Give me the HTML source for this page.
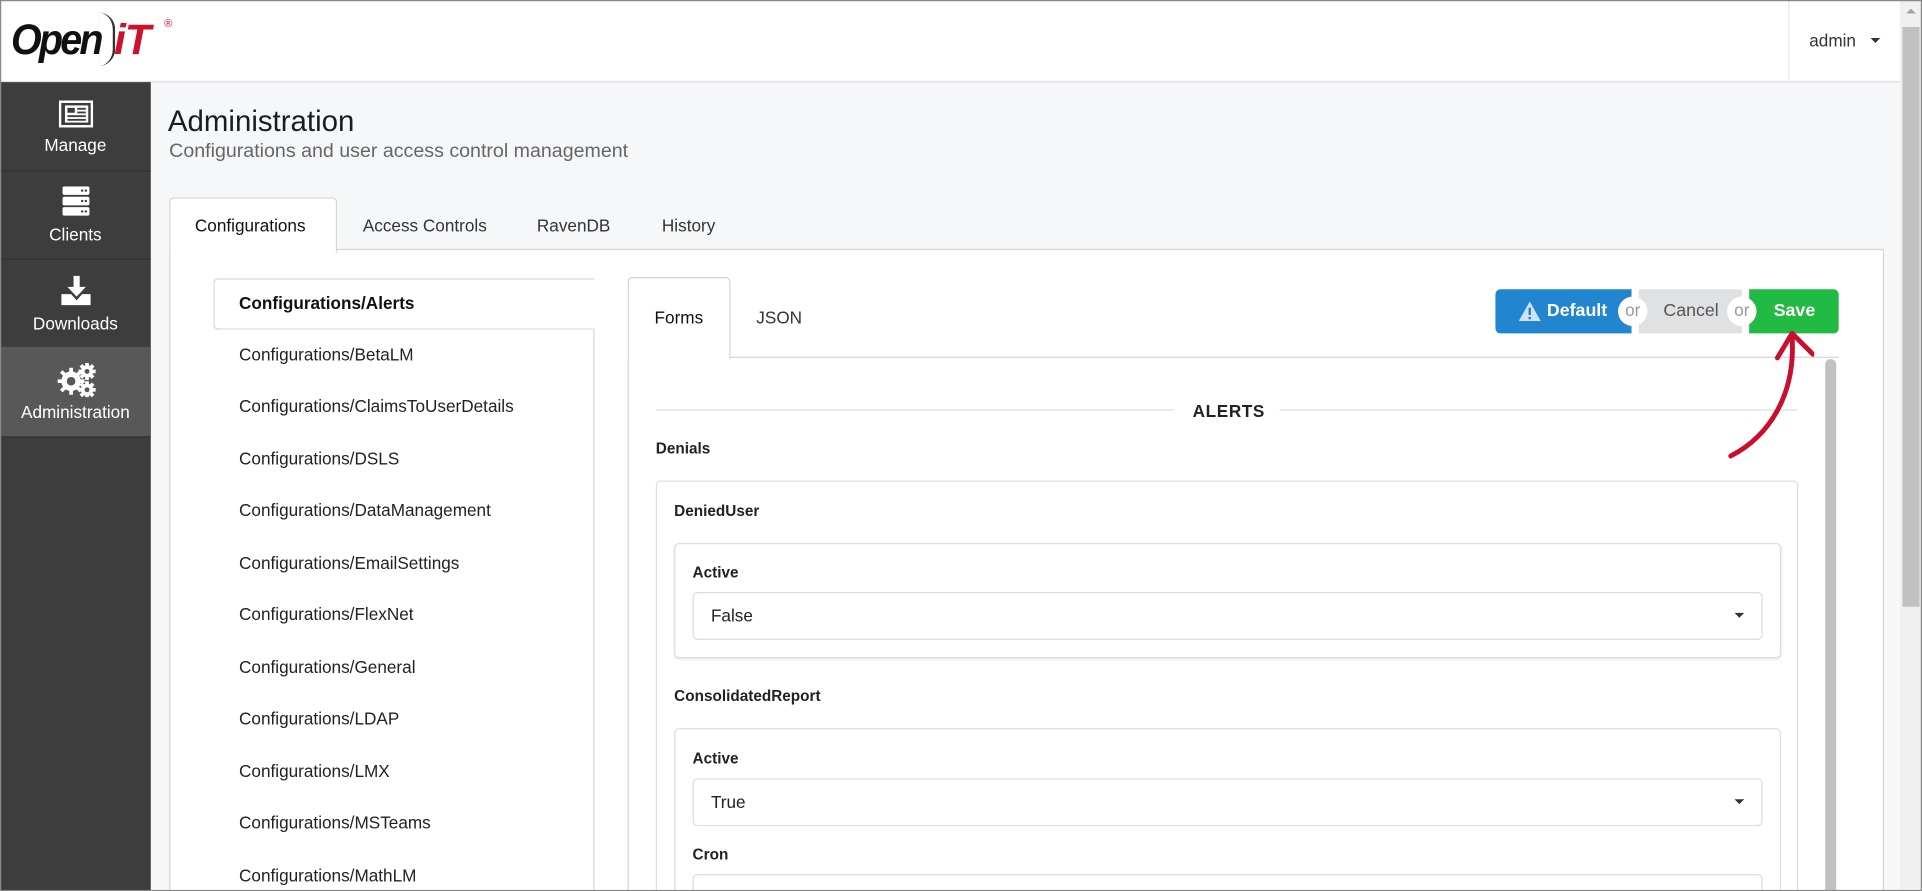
<!DOCTYPE html>
<html><head><meta charset="utf-8"><style>
html,body{margin:0;padding:0;width:1922px;height:891px;overflow:hidden;background:#fff}
#w{position:absolute;left:0;top:0;width:1568px;height:727px;transform:scale(1.22577);transform-origin:0 0;font-family:"Liberation Sans",sans-serif;color:#222;background:#f6f7f9;overflow:hidden}
.a{position:absolute}
.t{position:absolute;white-space:nowrap}
</style></head><body><div id="w">
<!-- header -->
<div class="a" style="left:0;top:0;width:1550px;height:66px;background:#fff;box-shadow:0 1px 2px rgba(0,0,0,.15)"></div>
<div class="t" style="left:9px;top:13px;font-size:35px;font-weight:bold;font-style:italic;letter-spacing:-2.5px;color:#111;transform:scaleX(.92);transform-origin:0 0">Open</div>
<div class="a" style="left:80px;top:10px;width:12px;height:44px;border-right:2px solid #333;border-radius:0 30px 30px 0"></div>
<div class="t" style="left:93px;top:13px;font-size:35px;font-weight:bold;font-style:italic;color:#d0112b;letter-spacing:-1px">iT</div>
<div class="t" style="left:134px;top:14px;font-size:9px;color:#d0112b">®</div>
<div class="a" style="left:1459px;top:0;width:1px;height:66px;background:#e6e6e6"></div>
<div class="t" style="left:1476px;top:25px;font-size:14px;color:#333">admin</div>
<div class="a" style="left:1526px;top:31px;border-left:4px solid transparent;border-right:4px solid transparent;border-top:4px solid #333"></div>
<!-- scrollbar -->
<div class="a" style="left:1550px;top:0;width:18px;height:727px;background:#f0f0f0"></div>
<div class="a" style="left:1552px;top:22px;width:14px;height:473px;background:#c1c1c1"></div>
<div class="a" style="left:1555px;top:7px;border-left:4px solid transparent;border-right:4px solid transparent;border-bottom:4px solid #a3a3a3"></div>
<!-- sidebar -->
<div class="a" style="left:0;top:67px;width:123px;height:660px;background:#3d3d3d"></div>
<div class="a" style="left:0;top:139px;width:123px;height:1px;background:#333"></div>
<div class="a" style="left:0;top:211px;width:123px;height:1px;background:#333"></div>
<div class="a" style="left:0;top:283px;width:123px;height:73px;background:#585858"></div>
<div class="a" style="left:0;top:356px;width:123px;height:1px;background:#333"></div>
<svg class="a" style="left:48px;top:82px" width="28" height="22" viewBox="0 0 28 22"><rect x="1" y="1" width="26" height="20" fill="none" stroke="#fff" stroke-width="2"/><rect x="5" y="4" width="19" height="14" fill="#fff"/><rect x="7" y="6" width="6" height="4" fill="#3d3d3d"/><rect x="15" y="6" width="7" height="1.5" fill="#3d3d3d"/><rect x="15" y="9" width="7" height="1.5" fill="#3d3d3d"/><rect x="7" y="12" width="15" height="1.5" fill="#3d3d3d"/><rect x="7" y="15" width="15" height="1.5" fill="#3d3d3d"/></svg>
<div class="t" style="left:0;width:123px;text-align:center;top:110px;font-size:14px;color:#fff">Manage</div>
<svg class="a" style="left:51px;top:152px" width="22" height="24" viewBox="0 0 22 24"><rect x="0" y="0" width="22" height="7" rx="1.5" fill="#fff"/><rect x="0" y="8.5" width="22" height="7" rx="1.5" fill="#fff"/><rect x="0" y="17" width="22" height="7" rx="1.5" fill="#fff"/><g fill="#3d3d3d"><circle cx="16" cy="3.5" r="1"/><circle cx="19" cy="3.5" r="1"/><circle cx="16" cy="12" r="1"/><circle cx="19" cy="12" r="1"/><circle cx="16" cy="20.5" r="1"/><circle cx="19" cy="20.5" r="1"/></g></svg>
<div class="t" style="left:0;width:123px;text-align:center;top:183px;font-size:14px;color:#fff">Clients</div>
<svg class="a" style="left:50px;top:225px" width="24" height="24" viewBox="0 0 24 24"><rect x="10" y="0" width="5" height="10" fill="#fff"/><path d="M5 9 L20 9 L12.5 17 Z" fill="#fff"/><path d="M0 15 L8 15 L12.5 20 L17 15 L24 15 L24 24 L0 24 Z" fill="#fff"/></svg>
<div class="t" style="left:0;width:123px;text-align:center;top:256px;font-size:14px;color:#fff">Downloads</div>
<svg class="a" style="left:47px;top:296px" width="32" height="28" viewBox="0 0 32 28"><g fill="#fff"><circle cx="11" cy="15" r="8"/><circle cx="24" cy="7" r="5"/><circle cx="24" cy="22" r="5"/></g><g stroke="#fff" stroke-width="3"><path d="M11 4v22M0 15h22M3 7l16 16M19 7L3 23"/><path d="M24 0v14M17 7h14M19 2l10 10M29 2L19 12"/><path d="M24 15v14M17 22h14M19 17l10 10M29 17L19 27"/></g><g fill="#585858"><circle cx="11" cy="15" r="3.5"/><circle cx="24" cy="7" r="2"/><circle cx="24" cy="22" r="2"/></g></svg>
<div class="t" style="left:0;width:123px;text-align:center;top:328px;font-size:14px;color:#fff">Administration</div>
<!-- title -->
<div class="t" style="left:137px;top:86px;font-size:24px;color:#1b1c1d">Administration</div>
<div class="t" style="left:138px;top:115px;font-size:16px;color:#666">Configurations and user access control management</div>
<!-- tabs -->
<div class="a" style="left:138px;top:203px;width:1397px;height:530px;background:#fff;border:1px solid #d4d4d5"></div>
<div class="a" style="left:138px;top:161px;width:135px;height:44px;background:#fff;border:1px solid #d4d4d5;border-bottom:none;border-radius:4px 4px 0 0"></div>
<div class="t" style="left:159px;top:176px;font-size:14px;color:#111">Configurations</div>
<div class="t" style="left:296px;top:176px;font-size:14px;color:#333">Access Controls</div>
<div class="t" style="left:438px;top:176px;font-size:14px;color:#333">RavenDB</div>
<div class="t" style="left:540px;top:176px;font-size:14px;color:#333">History</div>
<!-- left list -->
<div class="a" style="left:484px;top:227px;width:1px;height:500px;background:#d4d4d5"></div>
<div class="a" style="left:174px;top:227px;width:310px;height:40px;border:1px solid #d4d4d5;border-right:none;border-radius:4px 0 0 4px;background:#fff"></div>
<div class="t" style="left:195px;top:239px;font-size:14px;font-weight:bold;color:#111">Configurations/Alerts</div>
<div style="position:absolute;left:195px;top:268px;font-size:14px;color:#222;line-height:42.45px;white-space:nowrap">Configurations/BetaLM<br>Configurations/ClaimsToUserDetails<br>Configurations/DSLS<br>Configurations/DataManagement<br>Configurations/EmailSettings<br>Configurations/FlexNet<br>Configurations/General<br>Configurations/LDAP<br>Configurations/LMX<br>Configurations/MSTeams<br>Configurations/MathLM</div>
<!-- right panel tabs -->
<div class="a" style="left:595px;top:291px;width:905px;height:1px;background:#d4d4d5"></div>
<div class="a" style="left:512px;top:226px;width:82px;height:66px;background:#fff;border:1px solid #d4d4d5;border-bottom:none;border-radius:4px 4px 0 0"></div>
<div class="a" style="left:512px;top:292px;width:1px;height:440px;background:#d4d4d5"></div>
<div class="t" style="left:534px;top:251px;font-size:14px;color:#111">Forms</div>
<div class="t" style="left:617px;top:251px;font-size:14px;color:#333">JSON</div>
<!-- buttons -->
<div class="a" style="left:1220px;top:236px;width:111px;height:36px;background:#2185d0;border-radius:4px 0 0 4px"></div>
<svg class="a" style="left:1239px;top:246px" width="18" height="16" viewBox="0 0 18 16"><path d="M9 0 L18 16 L0 16 Z" fill="#cfe3f5"/><rect x="8" y="5" width="2" height="6" fill="#2185d0"/><rect x="8" y="12.5" width="2" height="2" fill="#2185d0"/></svg>
<div class="t" style="left:1262px;top:246px;font-size:14.5px;font-weight:bold;color:#fff">Default</div>
<div class="a" style="left:1337px;top:236px;width:84px;height:36px;background:#e0e1e2"></div>
<div class="t" style="left:1357px;top:246px;font-size:14.5px;color:#555">Cancel</div>
<div class="a" style="left:1427px;top:236px;width:73px;height:36px;background:#21ba45;border-radius:0 4px 4px 0"></div>
<div class="t" style="left:1447px;top:246px;font-size:14.5px;font-weight:bold;color:#fff">Save</div>
<div class="a" style="left:1320px;top:242px;width:24px;height:24px;border-radius:50%;background:#fff;font-size:14px;color:#999;text-align:center;line-height:23px">or</div>
<div class="a" style="left:1409px;top:242px;width:24px;height:24px;border-radius:50%;background:#fff;font-size:14px;color:#999;text-align:center;line-height:23px">or</div>
<!-- inner scrollbar -->
<div class="a" style="left:1489px;top:293px;width:9px;height:440px;background:#c1c1c1;border-radius:4px 4px 0 0"></div>
<!-- ALERTS -->
<div class="a" style="left:535px;top:334px;width:423px;height:1px;background:#ddd"></div>
<div class="a" style="left:1044px;top:334px;width:422px;height:1px;background:#ddd"></div>
<div class="t" style="left:973px;top:327px;font-size:14px;font-weight:bold;letter-spacing:.5px;color:#222">ALERTS</div>
<div class="t" style="left:535px;top:359px;font-size:12.5px;font-weight:bold">Denials</div>
<div class="a" style="left:535px;top:392px;width:930px;height:340px;border:1px solid #ddd;border-radius:4px;background:#fff"></div>
<div class="t" style="left:550px;top:410px;font-size:12.5px;font-weight:bold">DeniedUser</div>
<div class="a" style="left:550px;top:443px;width:901px;height:92px;border:1px solid #ddd;border-radius:4px;box-shadow:0 1px 2px rgba(0,0,0,.1)"></div>
<div class="t" style="left:565px;top:460px;font-size:12.5px;font-weight:bold">Active</div>
<div class="a" style="left:565px;top:483px;width:871px;height:37px;border:1px solid #ddd;border-radius:4px"></div>
<div class="t" style="left:580px;top:494px;font-size:14px;color:#222">False</div>
<div class="a" style="left:1415px;top:500px;border-left:4px solid transparent;border-right:4px solid transparent;border-top:4px solid #333"></div>
<div class="t" style="left:550px;top:561px;font-size:12.5px;font-weight:bold">ConsolidatedReport</div>
<div class="a" style="left:550px;top:594px;width:901px;height:140px;border:1px solid #ddd;border-radius:4px"></div>
<div class="t" style="left:565px;top:612px;font-size:12.5px;font-weight:bold">Active</div>
<div class="a" style="left:565px;top:635px;width:871px;height:37px;border:1px solid #ddd;border-radius:4px"></div>
<div class="t" style="left:580px;top:646px;font-size:14px;color:#222">True</div>
<div class="a" style="left:1415px;top:652px;border-left:4px solid transparent;border-right:4px solid transparent;border-top:4px solid #333"></div>
<div class="t" style="left:565px;top:690px;font-size:12.5px;font-weight:bold">Cron</div>
<div class="a" style="left:565px;top:713px;width:871px;height:37px;border:1px solid #ddd;border-radius:4px"></div>
<!-- arrow -->
<svg class="a" style="left:1400px;top:260px" width="80" height="120" viewBox="0 0 80 120"><path d="M12 112 C45 95 65 60 62 15" fill="none" stroke="#c8102e" stroke-width="4" stroke-linecap="round"/><path d="M50 32 L62 12 L79 29" fill="none" stroke="#c8102e" stroke-width="4" stroke-linecap="round" stroke-linejoin="round"/></svg>
<!-- window border -->
<div class="a" style="left:0;top:0;width:1566px;height:725px;border:1px solid #888;pointer-events:none"></div>
</div></body></html>
